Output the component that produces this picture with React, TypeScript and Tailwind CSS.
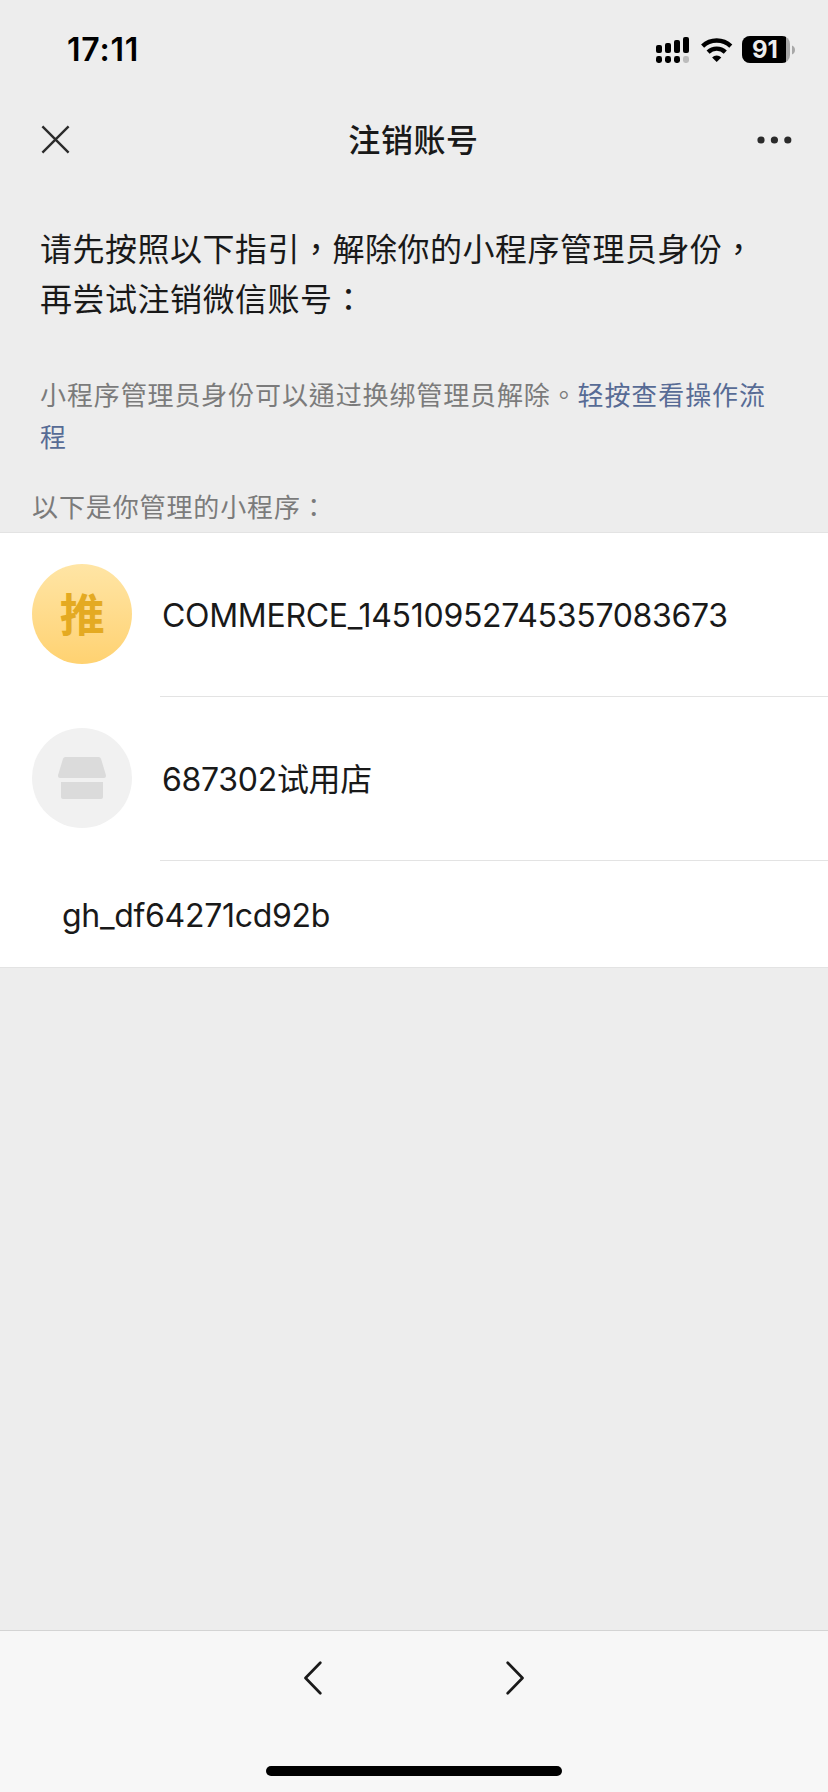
import type { ReactNode } from 'react';

const programs = [
  { name: 'COMMERCE_14510952745357083673', avatar: <PromoAvatar /> },
  { name: '687302试用店', avatar: <StoreAvatar /> },
];

function SignalIcon() {
  return (
    <svg width="33" height="27" viewBox="0 0 33 27">
      <rect x="0" y="9" width="6" height="8" rx="2" />
      <rect x="9" y="7" width="6" height="10" rx="2" />
      <rect x="18" y="4" width="6" height="13" rx="2" />
      <rect x="27" y="1" width="6" height="16" rx="2" />
      <rect x="0" y="20" width="6" height="7" rx="2.4" />
      <rect x="9" y="20" width="6" height="7" rx="2.4" />
      <rect x="18" y="20" width="6" height="7" rx="2.4" />
      <rect x="27" y="20" width="6" height="7" rx="2.4" fill="#bcbcbc" />
    </svg>
  );
}

function WifiIcon() {
  return (
    <svg width="32" height="24" viewBox="0 0 32 24" fill="none">
      <path d="M1.6 8.2A20.4 20.4 0 0 1 29.8 8.2" stroke="#000" strokeWidth="4.4" />
      <path d="M7.1 14.1A12.4 12.4 0 0 1 24.3 14.1" stroke="#000" strokeWidth="4.4" />
      <path d="M15.7 24L11.1 19.4A6.6 6.6 0 0 1 20.3 19.4Z" fill="#000" />
    </svg>
  );
}

function Battery() {
  return (
    <div className="flex items-center gap-[2px]">
      <div className="flex h-[27px] w-12 overflow-hidden rounded-[8px] bg-[#a8a8a8]">
        <div className="flex h-full w-11 items-center justify-center bg-black pl-[2px] text-[24px] leading-none font-bold text-[#ededed]">
          91
        </div>
      </div>
      <svg width="4" height="10" viewBox="0 0 4 10">
        <path d="M0 0.5C4 2 4 8 0 9.5Z" fill="#a8a8a8" />
      </svg>
    </div>
  );
}

function StatusBar() {
  return (
    <div className="flex h-[99px] items-center justify-between pr-[32px] pl-[67px]">
      <span className="pt-[1px] text-[32px] leading-none font-semibold tracking-[0.8px] text-black">17:11</span>
      <div className="flex items-center">
        <SignalIcon />
        <div className="mr-[9px] ml-3">
          <WifiIcon />
        </div>
        <Battery />
      </div>
    </div>
  );
}

function NavBar() {
  return (
    <header className="flex h-[81px] items-center justify-between pr-[36px] pl-[41px]">
      <svg width="29" height="29" viewBox="0 0 29 29" stroke="#2b2b2b" strokeWidth="2.4">
        <path d="M1.4 1.4L27.6 27.6M27.6 1.4L1.4 27.6" />
      </svg>
      <h1 className="pt-[2px] text-[32px] leading-none font-medium tracking-[0.6px]">注销账号</h1>
      <svg width="35" height="8" viewBox="0 0 35 8" fill="#2b2b2b">
        <circle cx="4" cy="4" r="3.6" />
        <circle cx="17.4" cy="4" r="3.6" />
        <circle cx="30.8" cy="4" r="3.6" />
      </svg>
    </header>
  );
}

function PromoAvatar() {
  return (
    <div className="flex size-[100px] items-center justify-center rounded-full bg-linear-to-b from-[#ffe5a5] to-[#ffd271] pt-[2px] text-[45px] leading-none font-bold text-[#e4aa22]">
      推
    </div>
  );
}

function StoreAvatar() {
  return (
    <div className="flex size-[100px] items-center justify-center rounded-full bg-[#f1f1f1]">
      <svg width="48" height="42" viewBox="0 0 48 42" fill="#dbdbdb">
        <path d="M7.4 0H40.6Q42.4 0 43 1.7L47.9 18Q48.4 21 46 21H2Q-0.4 21 0.1 18L5 1.7Q5.6 0 7.4 0Z" />
        <path d="M3 25H45V40Q45 42 43 42H5Q3 42 3 40Z" />
      </svg>
    </div>
  );
}

function ProgramRow({ name, avatar }: { name: string; avatar: ReactNode }) {
  return (
    <li className="flex h-[164px] pl-8">
      <div className="pt-[31px]">{avatar}</div>
      <div className="ml-7 flex flex-1 items-center border-b border-[#e3e3e3] pt-[2px] pl-[2px]">{name}</div>
    </li>
  );
}

function Toolbar() {
  return (
    <footer className="flex h-[162px] flex-col items-center justify-between border-t border-[#d4d4d4] bg-[#f7f7f7] pt-[30px] pb-4">
      <div className="flex gap-[184px]">
        <svg width="18" height="34" viewBox="0 0 18 34" fill="none" stroke="#1a1a1a" strokeWidth="2.7" strokeLinecap="round" strokeLinejoin="round">
          <path d="M16.3 1.8L1.5 17L16.3 32.2" />
        </svg>
        <svg width="18" height="34" viewBox="0 0 18 34" fill="none" stroke="#1a1a1a" strokeWidth="2.7" strokeLinecap="round" strokeLinejoin="round">
          <path d="M1.7 1.8L16.5 17L1.7 32.2" />
        </svg>
      </div>
      <div className="h-[10px] w-[296px] rounded-full bg-black" />
    </footer>
  );
}

export default function App() {
  return (
    <div className="flex h-[1792px] w-[828px] flex-col bg-[#ededed] font-[Inter,'Noto_Sans_CJK_TC',sans-serif] text-[#191919]">
      <StatusBar />
      <NavBar />

      <main className="flex-1">
        <p className="px-10 pt-[45px] text-[32px] leading-[50px] tracking-[0.5px]">
          请先按照以下指引，解除你的小程序管理员身份，
          <br />
          再尝试注销微信账号：
        </p>
        <p className="px-10 pt-[50px] text-[26px] leading-[42px] tracking-[0.88px] text-[#7b7b7b]">
          小程序管理员身份可以通过换绑管理员解除。
          <a className="text-[#576b95]">
            轻按查看操作流
            <br />
            程
          </a>
        </p>
        <p className="px-8 pt-7 text-[26px] leading-[42px] tracking-[0.88px] text-[#7b7b7b]">以下是你管理的小程序：</p>

        <ul className="mt-[3px] border-y border-[#e3e3e3] bg-white text-[32px] leading-none tracking-[-0.3px]">
          {programs.map((program) => (
            <ProgramRow key={program.name} {...program} />
          ))}
          <li className="flex h-[106px] items-center pt-[3px] pl-[62px]">gh_df64271cd92b</li>
        </ul>
      </main>

      <Toolbar />
    </div>
  );
}
